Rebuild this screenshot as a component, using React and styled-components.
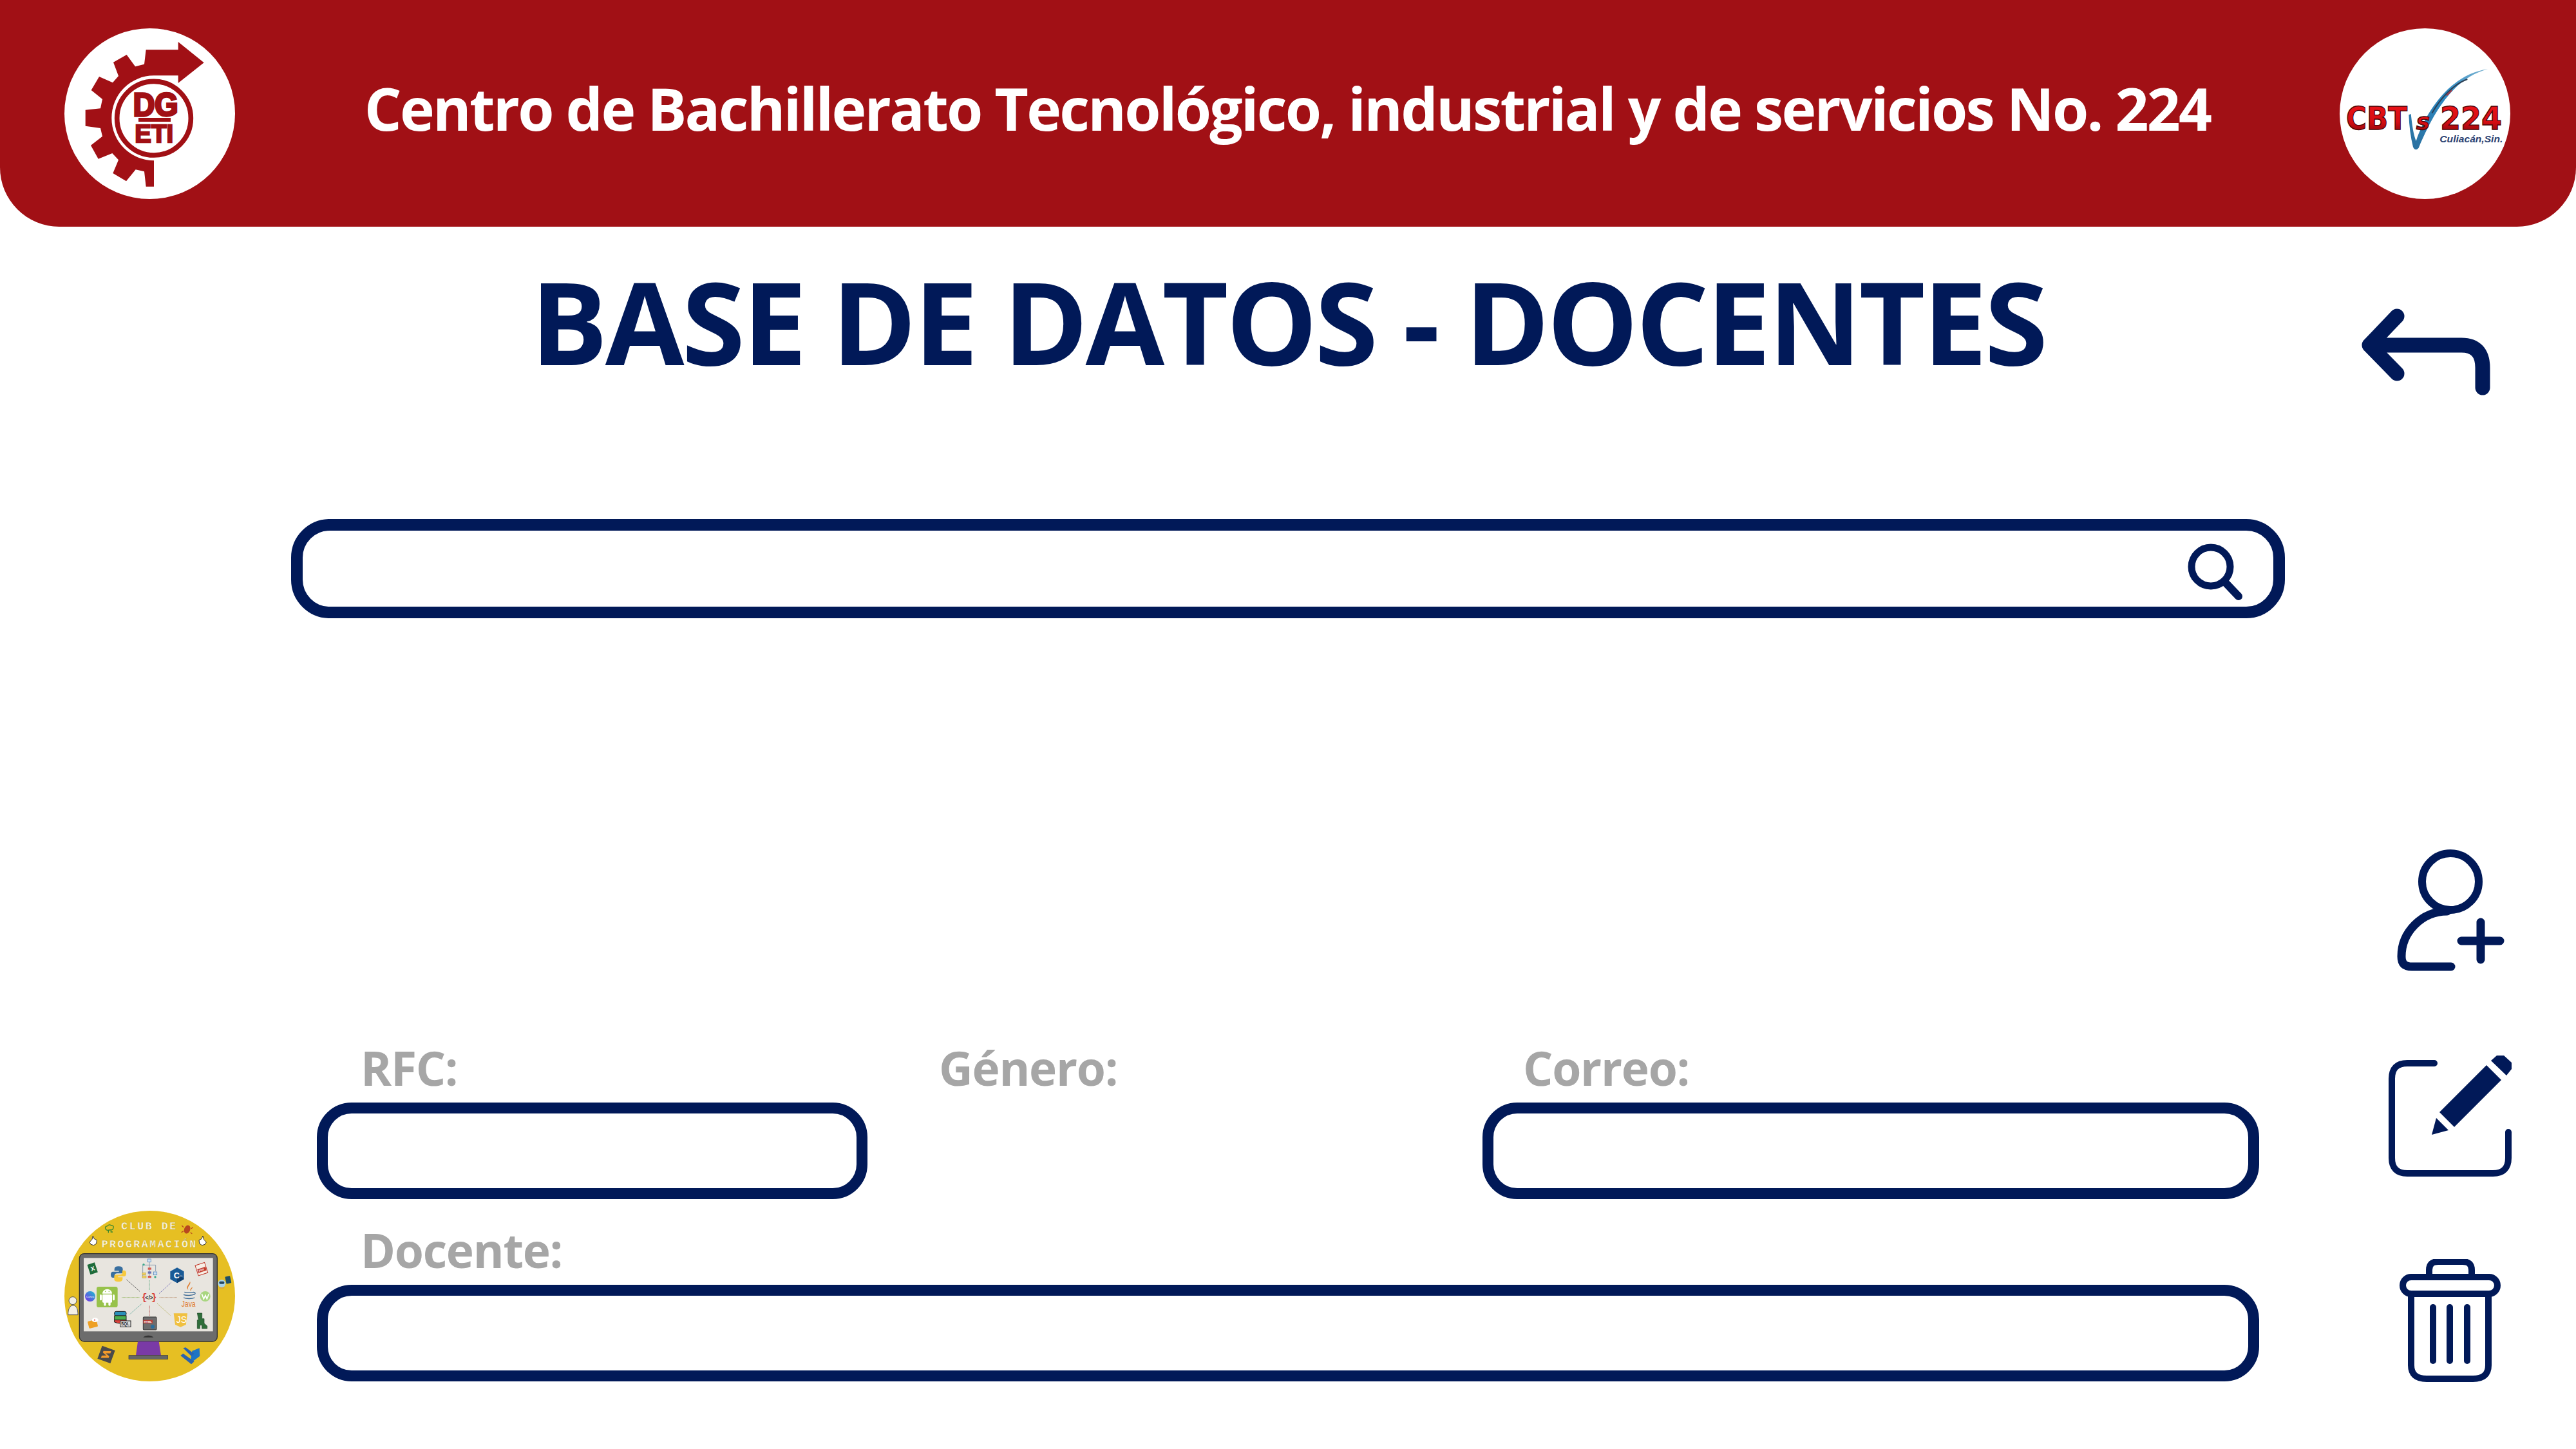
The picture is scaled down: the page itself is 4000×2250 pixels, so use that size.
import React from "react";
import styled, { createGlobalStyle } from "styled-components";

const NAVY = "#011958";
const RED = "#A11015";

const Global = createGlobalStyle`
  html, body { margin: 0; padding: 0; background: #fff; }
  * { box-sizing: border-box; }
`;

const Page = styled.div`
  width: 4000px;
  height: 2250px;
  display: flex;
  flex-direction: column;
  overflow: hidden;
  background: #fff;
  font-family: "Open Sans", "Liberation Sans", sans-serif;
`;

const Header = styled.header`
  height: 352px;
  flex: none;
  padding: 0 102px 0 100px;
  display: flex;
  align-items: center;
  justify-content: space-between;
  background: ${RED};
  border-radius: 0 0 92px 92px;
`;

const LogoSvg = styled.svg`
  width: 265px;
  height: 265px;
  flex: none;
  display: block;
`;

const SchoolName = styled.h2`
  margin: 0 0 16px;
  color: #fff;
  font-size: 91px;
  line-height: 110px;
  font-weight: 700;
  letter-spacing: -2.8px;
  white-space: nowrap;
`;

const TitleRow = styled.div`
  height: 275px;
  flex: none;
  display: grid;
  grid-template-columns: 1fr auto 1fr;
  align-items: start;
`;

const Title = styled.h1`
  grid-column: 2;
  margin: 46px 0 0;
  color: ${NAVY};
  font-size: 178px;
  line-height: 200px;
  font-weight: 700;
  letter-spacing: -3.8px;
  white-space: nowrap;
`;

const BackButton = styled.svg`
  grid-column: 3;
  justify-self: end;
  width: 216px;
  height: 145px;
  margin: 121px 125px 0 0;
  display: block;
`;

const SearchBar = styled.div`
  width: 3096px;
  height: 154px;
  flex: none;
  margin: 179px 0 0 452px;
  padding-right: 45px;
  display: flex;
  align-items: center;
  justify-content: flex-end;
  background: #fff;
  border: 18px solid ${NAVY};
  border-radius: 60px;
`;

const SearchIcon = styled.svg`
  width: 100px;
  height: 110px;
  display: block;
`;

const Bottom = styled.div`
  margin-top: auto;
  padding-bottom: 100px;
  display: grid;
  grid-template-columns: 492px 3016px 492px;
  align-items: end;
`;

const ClubLogo = styled.svg`
  width: 265px;
  height: 265px;
  margin: 0 0 5px 100px;
  display: block;
`;

const Form = styled.form`
  margin: 0 0 5px;
  display: grid;
  grid-template-columns: 855px 955px 1206px;
  row-gap: 50px;
`;

const Field = styled.div`
  grid-column: ${(p) => p.$span || "auto"};
  display: flex;
  flex-direction: column;
`;

const Label = styled.label`
  height: 83px;
  padding-left: ${(p) => p.$indent}px;
  color: #a6a6a6;
  font-size: 73px;
  line-height: 58px;
  font-weight: 700;
  letter-spacing: -1.3px;
`;

const TextInput = styled.div`
  height: 150px;
  background: #fff;
  border: 17px solid ${NAVY};
  border-radius: 54px;
`;

const Rail = styled.div`
  padding-left: 201px;
  display: flex;
  flex-direction: column;
  gap: 120px;
`;

const RailIcon = styled.svg`
  width: 192px;
  height: ${(p) => p.$h}px;
  display: block;
`;

const DgetiLogo = () => (
  <LogoSvg viewBox="0 0 795 795">
    <circle cx="397.5" cy="397.5" r="397.5" fill="#fff" />
    <g transform="translate(-120 -75)" fill={RED}>
      <path d="M500 175 H650 V138 L770 235 L650 330 V295 H537 A197 197 0 0 0 340 494 A197 197 0 0 0 537 691 L537 812 H500 L492 742 L452 733 L408 787 L346 750 L372 688 L343 657 L278 683 L243 620 L297 578 L288 540 L218 530 V455 L288 448 L297 405 L245 363 L282 300 L345 328 L372 297 L348 233 L410 198 L450 253 L492 242 Z" />
      <circle cx="537" cy="494" r="172" fill="none" stroke={RED} strokeWidth="23" />
      <text x="440" y="484" fontFamily="'Liberation Sans', sans-serif" fontWeight="700" fontSize="148" textLength="210" lengthAdjust="spacingAndGlyphs" stroke={RED} strokeWidth="10">DG</text>
      <rect x="465" y="492" width="150" height="18" />
      <text x="448" y="606" fontFamily="'Liberation Sans', sans-serif" fontWeight="700" fontSize="118" textLength="180" lengthAdjust="spacingAndGlyphs" stroke={RED} strokeWidth="7">ETI</text>
    </g>
  </LogoSvg>
);

const CbtsLogo = () => (
  <LogoSvg viewBox="0 0 795 795">
    <defs>
      <linearGradient id="cbtRed" x1="0" y1="0" x2="0" y2="1">
        <stop offset="0" stopColor="#f0141a" />
        <stop offset="0.6" stopColor="#d40d12" />
        <stop offset="1" stopColor="#6a0508" />
      </linearGradient>
      <linearGradient id="cbtBlue" x1="0" y1="1" x2="1" y2="0">
        <stop offset="0" stopColor="#2a6f9e" />
        <stop offset="0.6" stopColor="#2d8bc4" />
        <stop offset="1" stopColor="#7fb5d2" />
      </linearGradient>
    </defs>
    <circle cx="397.5" cy="397.5" r="397.5" fill="#fff" />
    <g transform="translate(-100 -75)">
      <path d="M422 478 L432 474 C438 530 444 570 456 600 C500 470 610 290 790 265 C660 300 560 410 468 632 Q452 650 442 628 C430 580 424 530 422 478 Z" fill="url(#cbtBlue)" />
      <path d="M530 470 C570 400 630 335 695 312" fill="none" stroke="#2c3f55" strokeWidth="6" />
      <path d="M598 388 L622 364" fill="none" stroke="#c8262a" strokeWidth="5" />
      <g fontFamily="'DejaVu Sans', sans-serif" fontWeight="700" fill="url(#cbtRed)" stroke="#4a0406" strokeWidth="4">
        <text x="130" y="546" fontSize="148" textLength="285" lengthAdjust="spacingAndGlyphs">CBT</text>
        <text x="456" y="546" fontSize="104" fontStyle="italic" textLength="64" lengthAdjust="spacingAndGlyphs">s</text>
        <text x="568" y="546" fontSize="148" textLength="288" lengthAdjust="spacingAndGlyphs">224</text>
      </g>
      <text x="566" y="606" fontFamily="'Liberation Sans', sans-serif" fontWeight="700" fontStyle="italic" fontSize="46" fill="#2b4272" textLength="294" lengthAdjust="spacingAndGlyphs">Culiacán,Sin.</text>
    </g>
  </LogoSvg>
);

const Android = () => (
  <g>
    <rect x="245" y="417" width="98" height="96" rx="10" fill="#97c24b" />
    <g fill="#fff">
      <path d="M272 449 a22 20 0 0 1 45 0 Z" />
      <rect x="272" y="453" width="45" height="38" rx="4" />
      <rect x="260" y="453" width="9" height="28" rx="4.5" />
      <rect x="320" y="453" width="9" height="28" rx="4.5" />
      <rect x="279" y="486" width="10" height="20" rx="5" />
      <rect x="300" y="486" width="10" height="20" rx="5" />
    </g>
    <circle cx="286" cy="439" r="2.5" fill="#97c24b" />
    <circle cx="303" cy="439" r="2.5" fill="#97c24b" />
  </g>
);

const ClubBadge = () => (
  <ClubLogo viewBox="0 0 795 795">
    <defs>
      <linearGradient id="canvaGrad" x1="0" y1="1" x2="1" y2="0">
        <stop offset="0" stopColor="#7c2ae8" />
        <stop offset="1" stopColor="#18c2cf" />
      </linearGradient>
    </defs>
    <circle cx="397.5" cy="397.5" r="397.5" fill="#e6bf23" />
    <g transform="translate(-95 -63)">
      <g fontFamily="'Liberation Mono', monospace" fontWeight="700" fill="#fbf6dc" stroke="#b8a040" strokeWidth="1">
        <text x="360" y="149" fontSize="50" textLength="255">CLUB DE</text>
        <text x="268" y="233" fontSize="50" textLength="440">PROGRAMACIÓN</text>
      </g>
      <g fill="none" stroke="#3d8a2e" strokeWidth="4">
        <path d="M288 150 q-8 -14 8 -16 q6 -10 18 -2 q14 0 8 14 q-2 8 -14 6 q-12 6 -20 -2z" />
        <path d="M300 152 v14 M312 152 v10 h8" />
      </g>
      <ellipse cx="667" cy="150" rx="14" ry="20" fill="#b8481f" transform="rotate(20 667 150)" />
      <path d="M650 140 l-8 -8 M650 158 l-10 6 M686 146 l8 -6 M682 164 l8 6" stroke="#b8481f" strokeWidth="4" />
      <path d="M212 210 l12 -14 l4 -16 l6 14 l12 6 l-2 16 l-12 8 l-14 -4 z" fill="#fff" stroke="#333" strokeWidth="3" />
      <path d="M756 210 l-12 -14 l-4 -16 l-6 14 l-12 6 l2 16 l12 8 l14 -4 z" fill="#fff" stroke="#333" strokeWidth="3" />

      <rect x="165" y="263" width="642" height="409" rx="22" fill="#6c6c6c" stroke="#333" strokeWidth="4" />
      <rect x="185" y="283" width="602" height="342" fill="#e8e5df" />
      <path d="M462 653 a28 18 0 0 1 48 0 Z" fill="#333" />
      <path d="M437 672 H535 L545 737 H428 Z" fill="#7a3aa6" />
      <rect x="395" y="737" width="182" height="17" fill="#666" stroke="#333" strokeWidth="2" />

      <g strokeWidth="3" strokeDasharray="3 3" fill="none">
        <path d="M385 384 L447 440" stroke="#333" />
        <path d="M491 388 V432" stroke="#3b9a6a" />
        <path d="M592 398 L535 450" stroke="#5a55b0" />
        <path d="M363 467 H446" stroke="#7aa43a" />
        <path d="M538 467 H622" stroke="#b0805a" />
        <path d="M400 545 L456 496" stroke="#3b9a8a" />
        <path d="M492 506 V552" stroke="#b03a3a" />
        <path d="M528 496 L590 552" stroke="#a8a03a" />
      </g>

      <g transform="rotate(-18 226 332)">
        <rect x="208" y="308" width="36" height="48" fill="#1d6b3a" />
        <text x="217" y="343" fontFamily="'Liberation Sans', sans-serif" fontWeight="700" fontSize="28" fill="#fff">X</text>
      </g>

      <path d="M347 322 q-19 0 -19 13 v8 h21 v4 h-28 q-10 0 -10 14 t10 14 h8 v-10 q0 -10 12 -10 h18 q8 0 8 -8 v-12 q0 -13 -20 -13z" fill="#396f9f" />
      <path d="M347 394 q19 0 19 -13 v-8 h-21 v-4 h28 q10 0 10 -14 t-10 -14 h-8 v10 q0 10 -12 10 h-18 q-8 0 -8 8 v12 q0 13 20 13z" fill="#f7c93e" />

      <g fill="#cfe0f2" stroke="#5a8cc0" strokeWidth="2.5">
        <rect x="483" y="288" width="15" height="14" />
        <rect x="510" y="348" width="16" height="14" />
      </g>
      <path d="M491 302 V370 M460 316 H520 V345 M460 316 V345 M460 345 V372" fill="none" stroke="#7a8fa8" strokeWidth="2.5" />
      <g fill="#d65a50">
        <rect x="484" y="328" width="16" height="10" />
        <rect x="484" y="366" width="16" height="10" />
        <rect x="484" y="346" width="16" height="10" fill="#6a6fb0" />
      </g>
      <circle cx="464" cy="314" r="5" fill="#3aa88a" />
      <circle cx="518" cy="372" r="5" fill="#3aa88a" />
      <rect x="458" y="352" width="16" height="10" fill="#f0d060" stroke="#a89030" strokeWidth="1.5" />
      <rect x="458" y="366" width="18" height="10" fill="#f0d060" stroke="#a89030" strokeWidth="1.5" />

      <path d="M620 328 L652 346 V382 L620 400 L588 382 V346 Z" fill="#195a96" />
      <path d="M620 400 L652 382 L635 364 L620 372 Z" fill="#0f3f70" />
      <text x="604" y="378" fontFamily="'Liberation Sans', sans-serif" fontWeight="700" fontSize="38" fill="#fff">C</text>
      <text x="631" y="368" fontFamily="'Liberation Sans', sans-serif" fontWeight="700" fontSize="12" fill="#fff">++</text>

      <g transform="rotate(-18 733 333)">
        <rect x="710" y="310" width="46" height="50" fill="#f7efe6" stroke="#c0392b" strokeWidth="3" />
        <rect x="714" y="330" width="40" height="18" fill="#c0392b" />
        <text x="719" y="344" fontFamily="'Liberation Sans', sans-serif" fontWeight="700" fontSize="13" fill="#fff">PDF</text>
      </g>

      <circle cx="828" cy="402" r="18" fill="#a9d3e8" />
      <rect x="816" y="392" width="24" height="12" rx="5" fill="#24465e" />
      <rect x="846" y="368" width="24" height="34" rx="3" transform="rotate(-12 858 385)" fill="#1e4f66" />
      <path d="M815 420 h27 l-4 6 h-19 z" fill="#d8a83a" />

      <circle cx="215" cy="462" r="24" fill="url(#canvaGrad)" />
      <text x="196" y="467" fontFamily="'Liberation Sans', sans-serif" fontStyle="italic" fontSize="13" fill="#fff">Canva</text>

      <Android />

      <g fontFamily="'Liberation Mono', monospace" fontWeight="700" fontSize="44">
        <text x="454" y="481" fill="#d8413a">{"{"}</text>
        <text x="499" y="481" fill="#d8413a">{"}"}</text>
      </g>
      <text x="471" y="478" fontFamily="'Liberation Sans', sans-serif" fontWeight="700" fontSize="26" fill="#333">{"</>"}</text>

      <path d="M680 392 c8 14 -16 22 -8 40 c-16 -14 6 -26 8 -40 z M690 418 c4 8 -8 12 -6 20 c-8 -8 4 -14 6 -20z" fill="#e07a2a" />
      <g fill="none" stroke="#3c6a96" strokeWidth="4">
        <path d="M654 442 c10 4 32 4 44 0" />
        <path d="M650 454 c14 5 38 5 52 -2 c6 -6 -2 -10 -6 -8" />
        <path d="M650 468 c12 6 40 6 52 0" />
      </g>
      <text x="640" y="510" fontFamily="'Liberation Sans', sans-serif" fontSize="36" fill="#e07a2a" textLength="66" lengthAdjust="spacingAndGlyphs">Java</text>

      <circle cx="751" cy="462" r="24" fill="#a9d680" />
      <path d="M735 450 l9 24 l8 -17 l7 17 l9 -24" fill="none" stroke="#fff" strokeWidth="5" />

      <circle cx="134" cy="482" r="18" fill="#f3efe4" stroke="#555" strokeWidth="3" />
      <path d="M112 548 c0 -30 10 -44 24 -44 c14 0 22 14 22 44 z" fill="#f3efe4" stroke="#555" strokeWidth="3" />

      <g transform="rotate(-14 226 590)">
        <rect x="206" y="574" width="42" height="34" rx="4" fill="#eea024" />
      </g>
      <ellipse cx="238" cy="572" rx="15" ry="10" fill="#fff" />
      <circle cx="236" cy="572" r="3" fill="#d8413a" />

      <g stroke="#222" strokeWidth="3">
        <rect x="328" y="532" width="55" height="20" rx="8" fill="#2a8fb8" />
        <rect x="328" y="552" width="55" height="20" fill="#4cae4c" />
        <path d="M328 572 h55 v10 q-27 12 -55 0 z" fill="#d8413a" />
        <rect x="355" y="576" width="49" height="28" fill="#ddd" />
      </g>
      <text x="359" y="597" fontFamily="'Liberation Sans', sans-serif" fontWeight="700" fontSize="19" fill="#222">SQL</text>

      <rect x="462" y="558" width="62" height="60" rx="3" fill="#6d6d6d" stroke="#333" strokeWidth="3" />
      <rect x="462" y="572" width="44" height="16" fill="#b8413a" />
      <text x="466" y="585" fontFamily="'Liberation Sans', sans-serif" fontWeight="700" fontSize="13" fill="#fff">HTML</text>
      <circle cx="506" cy="603" r="9" fill="#2a6f9e" />

      <path d="M604 541 H668 L661 594 L636 605 L611 594 Z" fill="#f0c040" />
      <text x="616" y="586" fontFamily="'Liberation Sans', sans-serif" fontSize="42" fill="#fff">JS</text>

      <path d="M714 540 h22 v26 h10 v22 l14 12 v12 h-24 v-16 h-10 v16 h-12 v-40 h6 z" fill="#2f6e3a" stroke="#1a3f22" strokeWidth="2" />

      <g transform="rotate(20 290 733)">
        <rect x="258" y="701" width="64" height="64" fill="#4a4a4a" />
        <path d="M272 728 L306 716 V727 L286 735 L306 742 V750 L272 762 V751 L292 743 L272 736 Z" fill="#f49a2b" transform="translate(0 -6)" />
      </g>

      <path d="M724 703 L690 716 L680 775 L726 740 Z" fill="#1f74c4" />
      <path d="M636 738 L648 728 L700 766 L686 778 Z M648 703 L660 700 L700 730 L686 740 Z" fill="#2a62b0" />
    </g>
  </ClubLogo>
);

export default function App() {
  return (
    <Page>
      <Global />
      <Header>
        <DgetiLogo />
        <SchoolName>Centro de Bachillerato Tecnológico, industrial y de servicios No. 224</SchoolName>
        <CbtsLogo />
      </Header>

      <TitleRow>
        <Title>BASE DE DATOS - DOCENTES</Title>
        <BackButton viewBox="3659 472 216 145" fill="none" stroke={NAVY} strokeWidth="23" strokeLinecap="round" strokeLinejoin="round">
          <path d="M3722 490 L3679 535 L3722 579 M3679 535 H3822 Q3855 535 3855 570 V601" />
        </BackButton>
      </TitleRow>

      <SearchBar>
        <SearchIcon viewBox="3385 825 100 110" fill="none" stroke={NAVY} strokeLinecap="round">
          <circle cx="3433" cy="877" r="30" strokeWidth="11" />
          <path d="M3455 901 L3476 923" strokeWidth="12" />
        </SearchIcon>
      </SearchBar>

      <Bottom>
        <ClubBadge />
        <Form>
          <Field>
            <Label $indent={68}>RFC:</Label>
            <TextInput />
          </Field>
          <Field>
            <Label $indent={111}>Género:</Label>
          </Field>
          <Field>
            <Label $indent={63}>Correo:</Label>
            <TextInput />
          </Field>
          <Field $span="1 / -1">
            <Label $indent={68}>Docente:</Label>
            <TextInput />
          </Field>
        </Form>
        <Rail>
          <RailIcon $h={200} viewBox="3709 1315 192 200" fill="none" stroke={NAVY} strokeLinecap="round">
            <circle cx="3805" cy="1369" r="44" strokeWidth="12" />
            <path d="M3800 1415 C3760 1415 3729 1448 3729 1485 C3729 1497 3735 1501 3745 1501 H3806" strokeWidth="13" />
            <path d="M3822 1461 H3882 M3852 1432 V1490" strokeWidth="13" />
          </RailIcon>
          <RailIcon $h={200} viewBox="3709 1635 192 200" fill="none">
            <path d="M3780 1651 H3738 Q3714 1651 3714 1675 V1798 Q3714 1822 3738 1822 H3871 Q3895 1822 3895 1798 V1758" stroke={NAVY} strokeWidth="10" strokeLinecap="round" />
            <path d="M3788 1727 L3861 1654 L3884 1677 L3811 1750 Z M3783 1736 L3802 1755 L3776 1762 Z M3868 1647 L3877 1639 H3888 L3900 1650 V1660 L3892 1670 Z" fill={NAVY} />
          </RailIcon>
          <RailIcon $h={195} viewBox="3709 1955 192 195" fill="none" stroke={NAVY} strokeWidth="10" strokeLinecap="round">
            <path d="M3772 1982 V1972 Q3772 1959 3786 1959 H3824 Q3838 1959 3838 1972 V1982" />
            <rect x="3731" y="1983" width="147" height="26" rx="13" />
            <path d="M3744 2009 V2120 Q3744 2141 3768 2141 H3840 Q3864 2141 3864 2120 V2009" />
            <path d="M3778 2030 V2113 M3804 2030 V2113 M3831 2030 V2113" />
          </RailIcon>
        </Rail>
      </Bottom>
    </Page>
  );
}
